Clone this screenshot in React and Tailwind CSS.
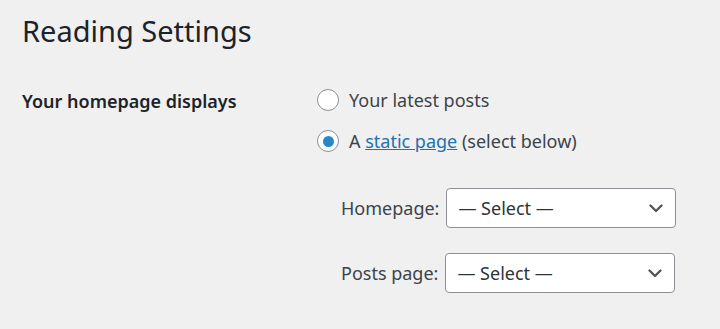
import React, { useState } from 'react';

const Radio = ({ checked, onClick }) => (
  <span
    onClick={onClick}
    className="flex h-[22px] w-[22px] shrink-0 items-center justify-center rounded-full border border-[#8c8f94] bg-white cursor-pointer"
  >
    {checked && <span className="block h-[11px] w-[11px] rounded-full bg-[#2a86c8]"></span>}
  </span>
);

const Chevron = () => (
  <svg className="h-[16px] w-[16px]" viewBox="0 0 16 16" fill="none" stroke="#50575e" strokeWidth="2.4" strokeLinecap="round" strokeLinejoin="round">
    <path d="M2.5 5.5 8 11l5.5-5.5" />
  </svg>
);

const SelectBox = ({ label }) => (
  <div className="flex items-center gap-[7px]">
    <span className="text-[18px] text-[#3c434a]">{label}</span>
    <div className="flex h-[40px] w-[230px] items-center justify-between rounded-[4px] border border-[#8c8f94] bg-white pl-[11px] pr-[11px]">
      <span className="text-[18px] text-[#2c3338]">— Select —</span>
      <Chevron />
    </div>
  </div>
);

export default function App() {
  const [choice, setChoice] = useState('page');

  return (
    <div className="min-h-screen bg-[#f0f0f1] pl-[22px] text-[#1d2327] font-['Noto_Sans','Open_Sans',sans-serif]">
      <h1 className="pt-[12px] text-[29px] leading-[38px] font-normal">Reading Settings</h1>

      <div className="mt-[37px] flex">
        <div className="w-[295px] text-[18px] font-semibold leading-[26px] pt-[1px]">Your homepage displays</div>
        <div className="flex flex-col">
          <label className="flex items-center gap-[10px] text-[18px] leading-[26px] text-[#3c434a]">
            <Radio checked={choice === 'posts'} onClick={() => setChoice('posts')} />
            <span>Your latest posts</span>
          </label>
          <label className="mt-[15px] flex items-center gap-[10px] text-[18px] leading-[26px] text-[#3c434a]">
            <Radio checked={choice === 'page'} onClick={() => setChoice('page')} />
            <span>
              A <a href="#" className="text-[#2271b1] underline">static page</a> (select below)
            </span>
          </label>

          <div className="mt-[34px] ml-[24px] flex flex-col gap-[25px]">
            <SelectBox label="Homepage:" />
            <SelectBox label="Posts page:" />
          </div>
        </div>
      </div>
    </div>
  );
}
